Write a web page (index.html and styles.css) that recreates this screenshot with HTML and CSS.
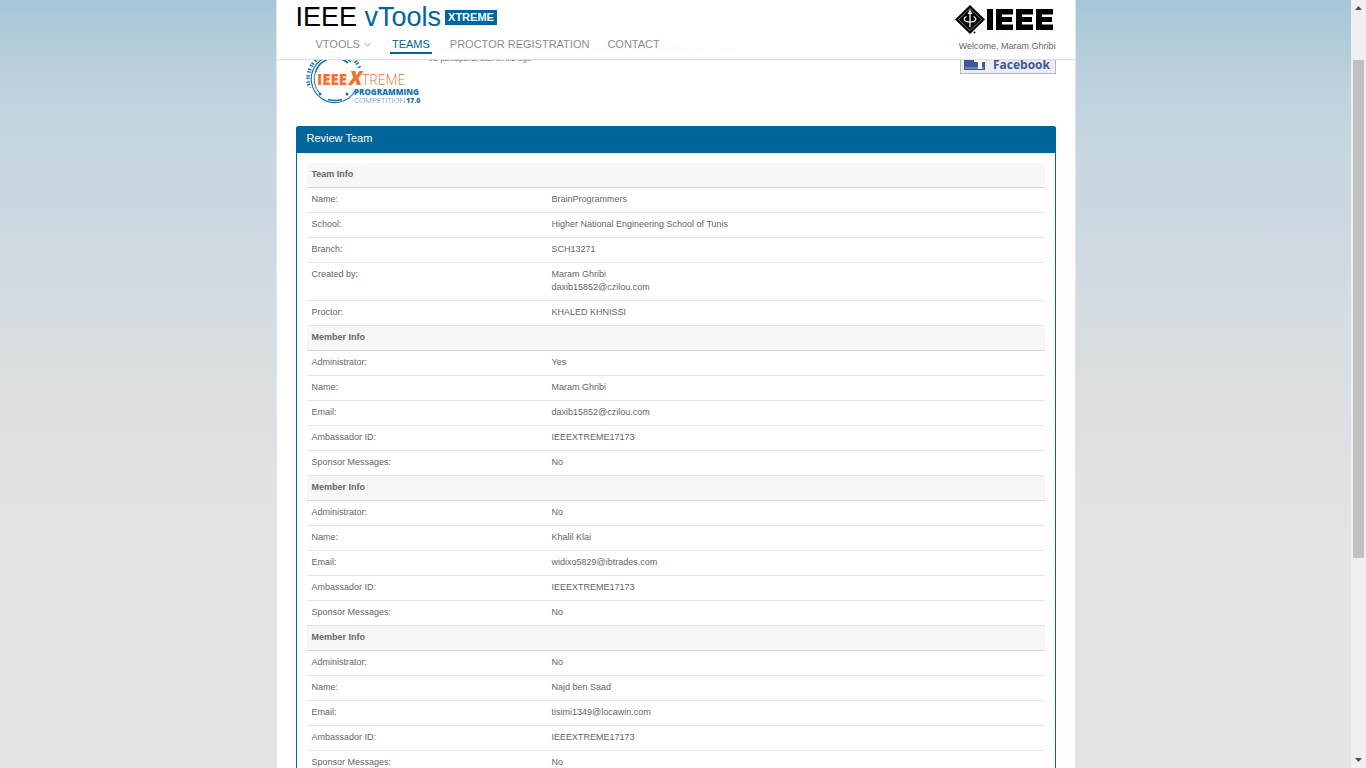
FILE: index.html
```
<!DOCTYPE html>
<html lang="en">
<head>
<meta charset="utf-8">
<title>IEEE vTools XTREME - Review Team</title>
<link rel="stylesheet" href="styles.css">
</head>
<body>
<div class="page">
  <div class="sheet">
    <header class="topbar">
      <div class="brand-row">
        <a class="brand" href="#">IEEE <span class="brand-blue">vTools</span></a>
        <span class="tag">XTREME</span>
        <svg class="ieee-logo" width="102" height="32" viewBox="0 0 102 32" role="img" aria-label="IEEE">
          <path d="M16 2 31 16.500 16 31 1 16.500Z"/>
          <path d="M16 5.500 27.500 16.500 16 27.500 4.500 16.500Z" fill="none" stroke="#aaa" stroke-width=".7"/>
          <path d="M16 9v15" stroke="#fff" stroke-width="1.300"/>
          <path d="M16 7.500l-1.500 3h3zM12.500 13.500c-4 2-3 5.500 3.500 5.500s7.500-3.500 3.500-5.500" fill="none" stroke="#fff" stroke-width="1.100"/>
          <circle cx="20.500" cy="29.500" r="1"/>
          <path d="M33 6h6v21h-6zM42 6h17v5.500H48v2.500h10v5H48v2.500h11V27H42zM62 6h17v5.500H68v2.500h10v5H68v2.500h11V27H62zM82 6h17v5.500H88v2.500h10v5H88v2.500h11V27H82z"/>
        </svg>
      </div>
      <div class="nav-row">
        <nav class="nav">
          <a href="#">VTOOLS<svg class="chev" width="7" height="5" viewBox="0 0 7 5"><path d="M.5 1l3 3 3-3" fill="none" stroke="#c4c4c4" stroke-width="1.200"/></svg></a>
          <a class="active" href="#">TEAMS</a>
          <a href="#">PROCTOR REGISTRATION</a>
          <a href="#">CONTACT</a>
        </nav>
        <span class="welcome">Welcome, Maram Ghribi</span>
      </div>
    </header>
    <main class="content">
      <section class="intro">
        <svg class="xtreme-logo" width="126" height="60" viewBox="0 0 126 60" role="img" aria-label="IEEEXtreme Programming Competition 17.0">
          <clipPath id="ring"><path d="M0 0h70v24H50V44H0z"/></clipPath>
          <g fill="none" stroke="#1a73b0">
            <circle cx="39" cy="35" r="27" stroke-width="3.500" stroke-dasharray="1.500 1 1.500 2.500" clip-path="url(#ring)"/>
            <path d="M55 18A23.500 23.500 0 1 0 59 47" stroke-width="1.200"/>
            <path d="M19.500 28a20.500 20.500 0 0 0 4 21" stroke-width="1"/>
            <path d="M32 55.500q7 2 14 0M19.500 28q3-9 11-12M36 14q9-1 16 5" stroke-width="1.700"/>
          </g>
          <circle cx="24" cy="50" r="1.500" fill="#1a73b0"/><circle cx="51" cy="50" r="1.500" fill="#1a73b0"/>
          <g class="logo-text">
            <text class="logo-ieee" x="21" y="41">IEEE</text>
            <text class="logo-x" x="53" y="41">X</text>
            <text class="logo-treme" x="66" y="41">TREME</text>
            <text class="logo-prog" x="58" y="51">PROGRAMMING</text>
            <text class="logo-comp" x="58" y="59">COMPETITION</text>
            <text class="logo-year" x="110" y="59">17.0</text>
          </g>
        </svg>
        <p class="sponsors">For more information about our generous sponsors and their contributions to IEEEXtreme 17.0 and<br>our participants, click on the logo.</p>
        <a class="facebook" href="#">
          <svg width="96" height="30" viewBox="0 0 96 30" role="img" aria-label="Find us on Facebook">
            <rect x=".5" y=".5" width="95" height="29" fill="#eceef3"/>
            <path d="M0 29.500h96M.5 0v30M95.500 0v30" stroke="#b4b7c0"/>
            <path d="M4 5h21v21H4z" fill="#3b5998"/>
            <path d="M5 23h19v2H5z" fill="#6d84b4"/>
            <path d="M18 25v-7h-4v-3h4v-2c0-3 1.500-5 4-5h3v3h-2c-1 0-1.500.5-1.500 1.500V15H25v3h-3v7z" fill="#fff"/>
            <text class="fb-small" x="33" y="9">Find us on</text>
            <text class="fb-name" x="33" y="25">Facebook</text>
          </svg>
        </a>
      </section>
      <section class="panel">
        <h1 class="panel-title">Review Team</h1>
        <table class="info">
          <colgroup><col class="col-label"><col></colgroup>
          <tbody>
            <tr><th colspan="2">Team Info</th></tr>
            <tr><td>Name:</td><td>BrainProgrammers</td></tr>
            <tr><td>School:</td><td>Higher National Engineering School of Tunis</td></tr>
            <tr><td>Branch:</td><td>SCH13271</td></tr>
            <tr><td>Created by:</td><td>Maram Ghribi<br>daxib15852@czilou.com</td></tr>
            <tr><td>Proctor:</td><td>KHALED KHNISSI</td></tr>
          </tbody>
          <tbody>
            <tr><th colspan="2">Member Info</th></tr>
            <tr><td>Administrator:</td><td>Yes</td></tr>
            <tr><td>Name:</td><td>Maram Ghribi</td></tr>
            <tr><td>Email:</td><td>daxib15852@czilou.com</td></tr>
            <tr><td>Ambassador ID:</td><td>IEEEXTREME17173</td></tr>
            <tr><td>Sponsor Messages:</td><td>No</td></tr>
          </tbody>
          <tbody>
            <tr><th colspan="2">Member Info</th></tr>
            <tr><td>Administrator:</td><td>No</td></tr>
            <tr><td>Name:</td><td>Khalil Klai</td></tr>
            <tr><td>Email:</td><td>widixo5829@ibtrades.com</td></tr>
            <tr><td>Ambassador ID:</td><td>IEEEXTREME17173</td></tr>
            <tr><td>Sponsor Messages:</td><td>No</td></tr>
          </tbody>
          <tbody>
            <tr><th colspan="2">Member Info</th></tr>
            <tr><td>Administrator:</td><td>No</td></tr>
            <tr><td>Name:</td><td>Najd ben Saad</td></tr>
            <tr><td>Email:</td><td>tisimi1349@locawin.com</td></tr>
            <tr><td>Ambassador ID:</td><td>IEEEXTREME17173</td></tr>
            <tr><td>Sponsor Messages:</td><td>No</td></tr>
          </tbody>
        </table>
      </section>
    </main>
  </div>
</div>
<div class="scrollbar" aria-hidden="true">
  <svg width="15" height="15" viewBox="0 0 15 15"><path d="M4 10h7L7.500 6z" fill="#505050"/></svg>
  <div class="track"><div class="thumb"></div></div>
  <svg width="15" height="15" viewBox="0 0 15 15"><path d="M4 5h7L7.500 9z" fill="#505050"/></svg>
</div>
</body>
</html>
```
FILE: styles.css
```
* { box-sizing: border-box; }

body {
  margin: 0;
  height: 100vh;
  display: flex;
  overflow: hidden;
  font-family: "Liberation Sans", Arial, sans-serif;
  font-size: 9px;
  line-height: 13px;
  color: #666;
}

a { color: inherit; text-decoration: none; }

.page {
  flex: 1;
  overflow: hidden;
  background: linear-gradient(#a6c6da 0, #adcbd8 28px, #bfd2de 88px, #c5d6de 140px, #ccd8e1 220px, #d3dbe1 294px, #d7dde0 330px, #dfe0e3 445px, #e4e4e4 540px, #e5e3e4 560px);
}

.sheet {
  position: relative;
  max-width: 800px;
  min-height: 100%;
  margin: 0 auto;
  padding: 0 19px;
  background: #fff;
  border: solid #dfe4ec;
  border-width: 0 1px;
}

/* Header floats over the scrolled content */
.topbar {
  position: absolute;
  top: 0;
  left: 0;
  right: 0;
  z-index: 2;
  padding: 0 19px;
  background: rgba(255, 255, 255, .96);
  border-bottom: 1px solid #e2e2e2;
  box-shadow: 0 1px 1px rgba(0, 0, 0, .04);
}

.brand-row {
  display: flex;
  align-items: center;
  gap: 4px;
  height: 34px;
}

.brand {
  font-size: 27px;
  line-height: 34px;
  color: #000;
}

.brand-blue { color: #069; }

.tag {
  padding: 1px 3px;
  background: #069;
  color: #fff;
  font-size: 11px;
  font-weight: bold;
}

.ieee-logo {
  margin: 4px 0 0 auto;
}

.nav-row {
  display: flex;
  align-items: flex-end;
  justify-content: space-between;
  height: 25px;
  padding-left: 20px;
}

.nav {
  display: flex;
  gap: 18px;
  align-self: flex-start;
  padding-top: 4px;
  font-size: 11px;
  color: #8c8c8c;
}

.chev { margin: 0 1px 1px 4px; }

.nav .active {
  padding: 0 2px 1px;
  color: #069;
  border-bottom: 2px solid #069;
}

.welcome { padding-bottom: 6px; }

.intro {
  display: flex;
  align-items: flex-start;
  justify-content: space-between;
  height: 126px;
  padding-top: 44px;
}

.xtreme-logo { flex: none; margin-right: 7px; }

.sponsors {
  flex: 1;
  margin: 0;
  padding-top: 1px;
  font-size: 7px;
  line-height: 9px;
}

.logo-text { font-family: "Open Sans", sans-serif; fill: #1a73b0; }
.logo-text .logo-ieee { font-size: 15px; font-weight: 800; fill: #e8762c; }
.logo-text .logo-x { font-size: 20px; font-weight: 800; font-style: italic; fill: #e8762c; }
.logo-text .logo-treme { font-size: 14px; font-weight: 300; fill: #e8762c; }
.logo-prog { font-size: 8px; font-weight: 800; }
.logo-comp { font-size: 8px; font-weight: 300; }
.logo-year { font-size: 7px; font-weight: 800; }

.facebook svg { display: block; }
.fb-small { font: bold 8px "Open Sans", sans-serif; fill: #3b5998; }
.fb-name { font: bold 12px "Open Sans", sans-serif; fill: #3b5998; }

.panel {
  border: 1px solid #069;
  border-radius: 2px 2px 0 0;
}

.panel-title {
  margin: 0;
  padding: 5px 10px 8px;
  background: #069;
  color: #fff;
  font-size: 11px;
  font-weight: normal;
}

.info {
  width: calc(100% - 20px);
  margin: 10px;
  border-collapse: separate;
  border-spacing: 0;
  table-layout: fixed;
}

.col-label { width: 240px; }

.info th,
.info td {
  padding: 5px 5px 6px;
  text-align: left;
  vertical-align: top;
  border-bottom: 1px solid #e1e4ea;
}

.info th {
  background: #f7f7f7;
  border-bottom-color: #d9dadc;
}

.scrollbar {
  display: flex;
  flex-direction: column;
  flex: none;
  width: 15px;
  background: #f0f0f0;
}

.track {
  flex: 1;
  display: grid;
  grid-template-rows: 45fr 498fr 195fr;
  padding: 0 2px;
}

.thumb { grid-row: 2; background: #c1c1c1; }
```
